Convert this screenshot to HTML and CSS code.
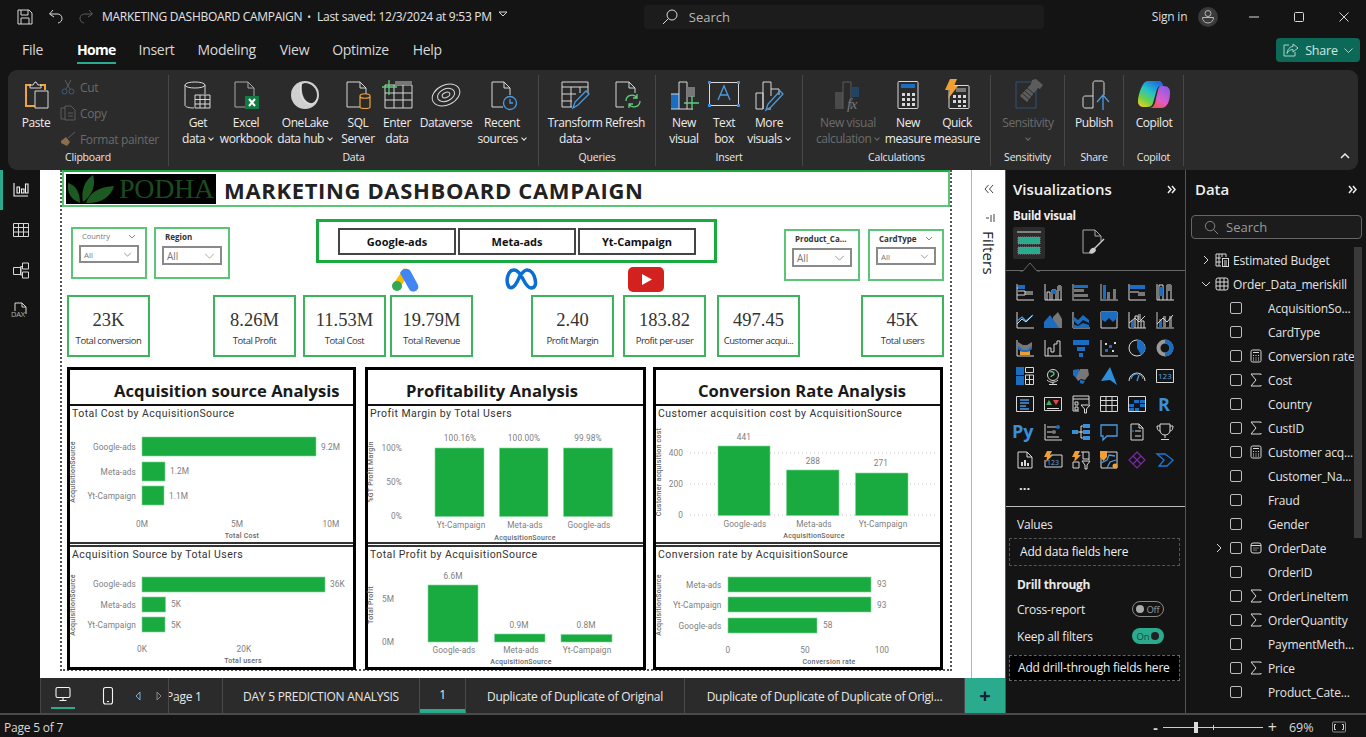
FILE: index.html
```html
<!DOCTYPE html>
<html lang="en">
<head>
<meta charset="utf-8">
<title>MARKETING DASHBOARD CAMPAIGN</title>
<link rel="stylesheet" href="styles.css">
</head>
<body>
<div class="app">
  <header class="titlebar">
    <svg class="tb-ic" viewBox="0 0 16 16"><path class="s" d="M1 1h11l3 3v11H1zM4 1v5h7V1M4 15V9h8v6"/></svg>
    <svg class="tb-ic undo" viewBox="0 0 16 16"><path class="s" d="M5 1 1.500 5 6 8M2 5h7a4.500 4.500 0 0 1 1 9"/></svg>
    <svg class="tb-ic redo" viewBox="0 0 16 16"><path class="dim" d="M11 1l3.500 4L10 8M14 5H7a4.500 4.500 0 0 0-1 9"/></svg>
    <span class="doc">MARKETING DASHBOARD CAMPAIGN</span><span class="doc-dot">•</span><span class="doc-saved">Last saved: 12/3/2024 at 9:53 PM</span>
    <svg class="doc-caret" viewBox="0 0 10 6"><path class="s" d="M1 1h8L5 5z"/></svg>
    <div class="search-top">
      <svg viewBox="0 0 16 16"><circle class="s" cx="10" cy="6" r="5"/><path class="s" d="M6.500 9.500 1 15"/></svg>
      <span>Search</span>
    </div>
    <span class="signin">Sign in</span>
    <svg class="avatar" viewBox="0 0 20 20"><circle class="av" cx="10" cy="10" r="10"/><circle class="sa" cx="10" cy="6.500" r="3"/><path class="sa" d="M4.500 10.500h11c0 3-2 5.500-5.500 5.500s-5.500-2.500-5.500-5.500z"/></svg>
    <svg class="win first" viewBox="0 0 12 12"><path class="s" d="M1 6h10"/></svg>
    <svg class="win" viewBox="0 0 12 12"><rect class="s" x="1.500" y="1.500" width="9" height="9" rx="1"/></svg>
    <svg class="win" viewBox="0 0 12 12"><path class="s" d="M1.500 1.500l9 9M10.500 1.500l-9 9"/></svg>
  </header>

  <nav class="menubar">
    <span class="menu m-file">File</span>
    <span class="menu m-home">Home</span>
    <span class="menu m-ins">Insert</span>
    <span class="menu m-mod">Modeling</span>
    <span class="menu m-view">View</span>
    <span class="menu m-opt">Optimize</span>
    <span class="menu m-help">Help</span>
    <button class="share"><svg viewBox="0 0 16 14"><path class="sh" d="M6 2H1v11h11V9M10 1l5 4-5 4V6.500C7 6.500 5 8 4 10.500 4.500 6 7 3.500 10 3.500z"/></svg>Share<svg class="share-caret" viewBox="0 0 9 5"><path class="sh" d="M.5.5l4 4 4-4"/></svg></button>
  </nav>

  <section class="ribbon">
    <div class="grp g-clip">
      <div class="grp-body">
        <div class="btn w40 paste">
          <svg viewBox="0 0 32 32"><path class="o" d="M15 27H6V6h5M20 6h5v5"/><path class="s" d="M10 6h3l2-3h1l2 3h3v3H10zM15 12h13v17H15z"/></svg>
          <span>Paste</span>
        </div>
        <div class="small">
          <div class="sm-row"><svg viewBox="0 0 16 16"><path class="dim" d="M5 1l5 9M11 1 6 10"/><circle class="dimb" cx="4.500" cy="12.500" r="2.500"/><circle class="dimb" cx="11.500" cy="12.500" r="2.500"/></svg><span>Cut</span></div>
          <div class="sm-row"><svg viewBox="0 0 16 16"><path class="dim" d="M5 3H1v11h4M5 1h6l4 4v10H5zM8 8h5M8 11h5"/></svg><span>Copy</span></div>
          <div class="sm-row"><svg viewBox="0 0 16 16"><path class="dim" d="M15 1 8 7"/><path class="dimf" d="M1 10l5-4 4 5-3 4-6-3z"/></svg><span>Format painter</span></div>
        </div>
      </div>
      <div class="grp-label">Clipboard</div>
    </div>

    <div class="grp g-data">
      <div class="grp-body">
        <div class="btn w44">
          <svg viewBox="0 0 32 32"><path class="s" d="M3 6v20c0 2 4 3 9 3M23 6v9M3 6c0-4 20-4 20 0s-20 4-20 0z"/><path class="s" d="M13 16h15v13H13zM13 20.500h15M13 25h15M18 16v13M23 16v13"/></svg>
          <span>Get<br>data <i class="cv"></i></span>
        </div>
        <div class="btn w52">
          <svg viewBox="0 0 32 32"><path class="sd" d="M16 28H5V3h13l6 6v9M18 3v6h6"/><rect class="xl" x="15" y="17" width="14" height="13"/><path class="w" d="M19 20l6 7M25 20l-6 7"/></svg>
          <span>Excel<br>workbook</span>
        </div>
        <div class="btn w66">
          <svg viewBox="0 0 32 32"><circle class="fl" cx="16" cy="16" r="14"/><path class="dk" d="M13 5c-1 8 1 17 8 19 4 1 7-3 7-8 0-7-6-12-12-12z"/><path class="skl" d="M12 4c-2 9 0 18 8 21 3 1 6-1 8-5"/></svg>
          <span>OneLake<br>data hub <i class="cv"></i></span>
        </div>
        <div class="btn w40">
          <svg viewBox="0 0 32 32"><path class="s" d="M18 28H5V3h13l6 6v6M18 3v6h6"/><path class="o1" d="M18 17c0-3 10-3 10 0v11c0 2-10 2-10 0zM18 17c0 3 10 3 10 0"/></svg>
          <span>SQL<br>Server</span>
        </div>
        <div class="btn w38">
          <svg viewBox="0 0 32 32"><path class="s" d="M4 6h27v23H4zM4 14h27M4 21h27M13 6v23M22 6v23"/><rect class="fg" x="14" y="2" width="17" height="4"/><path class="gr" d="M8 1v15M1 8h15"/></svg>
          <span>Enter<br>data</span>
        </div>
        <div class="btn w60">
          <svg viewBox="0 0 32 32"><g transform="rotate(-25 16 16)"><ellipse class="s" cx="16" cy="16" rx="14.500" ry="10"/><ellipse class="s" cx="16" cy="16" rx="9" ry="6"/><ellipse class="s" cx="16" cy="16" rx="4" ry="2.500"/></g></svg>
          <span>Dataverse</span>
        </div>
        <div class="btn w52">
          <svg viewBox="0 0 32 32"><path class="s" d="M17 28H6V3h12l6 6v7M18 3v6h6"/><circle class="bl" cx="24" cy="24" r="6.500"/><path class="bl" d="M24 20v4h3"/></svg>
          <span>Recent<br>sources <i class="cv"></i></span>
        </div>
      </div>
      <div class="grp-label">Data</div>
    </div>

    <div class="grp g-query">
      <div class="grp-body">
        <div class="btn w54">
          <svg viewBox="0 0 32 32"><path class="s" d="M3 3h26v11M3 3v25h10M3 8h26M3 15h14M3 22h10M12 8v20M21 8v6"/><path class="bl" d="M14 29l2-6L27 12l3 3-11 11z"/></svg>
          <span>Transform<br>data <i class="cv"></i></span>
        </div>
        <div class="btn w46">
          <svg viewBox="0 0 32 32"><path class="s" d="M15 28H7V3h13l6 6v5M20 3v6h6"/><path class="gn" d="M17 22c0-6 8-8 11-3M31 22c0 6-8 8-11 3M28 15v4h-4M20 29v-4h4"/></svg>
          <span>Refresh</span>
        </div>
      </div>
      <div class="grp-label">Queries</div>
    </div>

    <div class="grp g-insert">
      <div class="grp-body">
        <div class="btn w44">
          <svg viewBox="0 0 32 32"><rect class="fb" x="3" y="15" width="8" height="15"/><path class="s" d="M3 15h8M11 30V3h8v27M3 30h22"/><rect class="fg" x="19" y="8" width="8" height="10"/><path class="gr" d="M24 17v14M16 24h15"/></svg>
          <span>New<br>visual</span>
        </div>
        <div class="btn w36">
          <svg viewBox="0 0 32 32"><rect class="s" x="1.500" y="3.500" width="29" height="23"/><path class="bl" d="M10 21l6-14 6 14M12 16h8"/><path class="fb2" d="M0 2h3v3H0zM29 2h3v3h-3zM0 25h3v3H0zM29 25h3v3h-3z"/></svg>
          <span>Text<br>box</span>
        </div>
        <div class="btn w54">
          <svg viewBox="0 0 32 32"><path class="s" d="M3 14h7v16H3zM10 30V3h8v14M18 10h8v6M18 30h-3"/><path class="bl" d="M13 31l2-6L27 12l3 3-12 13z"/></svg>
          <span>More<br>visuals <i class="cv"></i></span>
        </div>
      </div>
      <div class="grp-label">Insert</div>
    </div>

    <div class="grp g-calc">
      <div class="grp-body">
        <div class="btn w76 off">
          <svg viewBox="0 0 32 32"><rect class="fd" x="3" y="13" width="8" height="17"/><path class="dim" d="M11 30V3h8v27"/><rect class="fdb" x="19" y="8" width="8" height="10"/><text class="fx" x="15" y="30">fx</text></svg>
          <span>New visual<br>calculation <i class="cv"></i></span>
        </div>
        <div class="btn w44">
          <svg viewBox="0 0 32 32"><rect class="s" x="6" y="2.500" width="20" height="27" rx="1"/><rect class="fb" x="9" y="5" width="14" height="4"/><path class="dots" d="M10 14h3v3h-3zM15 14h3v3h-3zM20 14h3v3h-3zM10 19h3v3h-3zM15 19h3v3h-3zM20 19h3v3h-3zM10 24h3v3h-3zM15 24h3v3h-3zM20 24h3v3h-3z"/></svg>
          <span>New<br>measure</span>
        </div>
        <div class="btn w54">
          <svg viewBox="0 0 32 32"><rect class="s" x="8" y="6.500" width="20" height="23" rx="1"/><rect class="fg" x="15" y="9" width="10" height="4"/><path class="dots" d="M12 16h3v3h-3zM17 16h3v3h-3zM22 16h3v3h-3zM12 21h3v3h-3zM17 21h3v3h-3zM22 21h3v3h-3zM17 26h3v2h-3zM22 26h3v2h-3z"/><path class="fo" d="M9 0h7l-3 7h4L7 20l2-9H4z"/></svg>
          <span>Quick<br>measure</span>
        </div>
      </div>
      <div class="grp-label">Calculations</div>
    </div>

    <div class="grp g-sens">
      <div class="grp-body">
        <div class="btn w64 off">
          <svg viewBox="0 0 32 32"><path class="sbl" d="M4 3h20v26H4z"/><path class="fd2" d="M20 1l4-1 7 6-3 4-2-1-11 14-7-6L19 5z"/><path class="stk" d="M11 15l7 6M13 12l7 6M15 9l7 6"/></svg>
          <span>Sensitivity<br><i class="cv"></i></span>
        </div>
      </div>
      <div class="grp-label">Sensitivity</div>
    </div>

    <div class="grp g-share">
      <div class="grp-body">
        <div class="btn w48">
          <svg viewBox="0 0 32 32"><path class="s" d="M15 29H7c-1 0-2-1-2-2v-8c0-1 1-2 2-2h8zM15 17V4c0-1 1-2 2-2h7c1 0 2 1 2 2v12"/><path class="bl" d="M25 31V16M19 23l6-7 6 7"/></svg>
          <span>Publish</span>
        </div>
      </div>
      <div class="grp-label">Share</div>
    </div>

    <div class="grp g-copilot">
      <div class="grp-body">
        <div class="btn w52">
          <svg viewBox="0 0 32 32">
            <defs>
              <linearGradient id="cpa" x1="0.700" y1="0" x2="0.100" y2="1"><stop offset="0" stop-color="#1f6fe0"/><stop offset=".4" stop-color="#25c2c8"/><stop offset=".7" stop-color="#6bd04a"/><stop offset="1" stop-color="#f5d020"/></linearGradient>
              <linearGradient id="cpb" x1="0.800" y1="0" x2="0.200" y2="1"><stop offset="0" stop-color="#8a5ce6"/><stop offset=".6" stop-color="#e05cc8"/><stop offset="1" stop-color="#f0553a"/></linearGradient>
            </defs>
            <path fill="url(#cpb)" d="M23 7h3c4 0 6 3 6 6 0 6-1 11-4 14-1 1-3 2-5 2H11c3 0 5-2 6-5l3-13c.5-2 1.500-4 3-4z"/>
            <path fill="url(#cpa)" d="M10 2h11c2 0 4 2 4 5h-2c-2 0-3 1-4 3l-4 14c-1 3-3 4-6 4H5c-3 0-5-3-5-5 0-7 3-15 6-19 1-1 2-2 4-2z"/>
          </svg>
          <span>Copilot</span>
        </div>
      </div>
      <div class="grp-label">Copilot</div>
    </div>
    <svg class="rib-caret" viewBox="0 0 10 6"><path class="wh2" d="M1 5l4-4 4 4"/></svg>
  </section>

  <main class="work">
    <aside class="rail">
      <div class="rail-it active"><svg viewBox="0 0 16 16"><path class="wh1" d="M1 1v13h14M4 11V5h2.500v6zM8.500 11V7h2.500v4zM12.500 11V2H15v9z"/></svg></div>
      <div class="rail-it"><svg viewBox="0 0 16 16"><path class="s" d="M.5 1.500h15v13H.5zM.5 5.500h15M.5 10h15M5.500 1.500v13M10.500 1.500v13"/></svg></div>
      <div class="rail-it"><svg viewBox="0 0 16 16"><path class="s" d="M.5 5.500h7v7h-7zM9.500 1h6v6h-6zM9.500 10h6v6h-6zM7.500 4.500h2M7.500 13h2M8 4.500V13"/></svg></div>
      <div class="rail-it"><svg viewBox="0 0 16 16"><path class="s" d="M2 9V1h7l4 4v7M9 1v4h4"/><text class="dax" x="-2" y="15">DAX</text></svg></div>
    </aside>

    <div class="center">
      <div class="canvas-row">
        <div class="canvas">
          <div class="page">
            <div class="report-title">
              <div class="logo">
                <svg viewBox="0 0 50 30"><path class="lf" d="M14 29C4 25 1 18 2 9c7 2 12 8 12 20zM17 28C15 17 18 7 27 1c3 9 0 20-10 27zM20 29C23 20 31 13 48 12c-3 11-14 18-28 17z"/></svg>
                <span>PODHA</span>
              </div>
              <h1>MARKETING DASHBOARD CAMPAIGN</h1>
            </div>

            <div class="filters-row">
              <div class="slicer sl-a">
                <div class="sl-head light">Country<svg viewBox="0 0 8 5"><path class="chev" d="M1 1l3 3 3-3"/></svg></div>
                <div class="sl-drop small-all"><span>All</span><svg viewBox="0 0 10 6"><path class="chev" d="M1 1l4 4 4-4"/></svg></div>
              </div>
              <div class="slicer sl-b">
                <div class="sl-head">Region</div>
                <div class="sl-drop"><span>All</span><svg viewBox="0 0 12 7"><path class="chevo" d="M1 1l5 5 5-5"/></svg></div>
              </div>
              <div class="campaign">
                <div class="campaign-box">
                  <div class="cbtn">Google-ads</div>
                  <div class="cbtn">Meta-ads</div>
                  <div class="cbtn">Yt-Campaign</div>
                </div>
                <div class="brand-row">
                  <svg class="brand b-g" viewBox="0 0 28 26"><path class="yg" d="M13 2 1 20h9L18 8z"/><path class="bg" d="M9 7c2-5 9-6 11-1l7 13c2 6-6 9-9 4z"/><circle class="gg" cx="6" cy="20" r="5"/></svg>
                  <svg class="brand b-m" viewBox="0 0 32 24"><path class="meta" d="M4 20C0 14 3 3 9 3c4 0 7 5 9 9s5 9 8 9c5 0 5-5 4-9-1-5-4-9-8-9-3 0-5 3-7 6l-3 6c-2 4-5 7-8 5z"/></svg>
                  <svg class="brand b-y" viewBox="0 0 36 25"><rect class="yt" width="36" height="25" rx="5"/><path class="wf" d="M14 7l10 5.500L14 18z"/></svg>
                </div>
              </div>
              <div class="slicer sl-c">
                <div class="sl-head">Product_Ca...</div>
                <div class="sl-drop"><span>All</span><svg viewBox="0 0 12 7"><path class="chev" d="M1 1l5 5 5-5"/></svg></div>
              </div>
              <div class="slicer sl-d">
                <div class="sl-head">CardType<svg viewBox="0 0 8 5"><path class="chev" d="M1 1l3 3 3-3"/></svg></div>
                <div class="sl-drop small-all"><span>All</span><svg viewBox="0 0 10 6"><path class="chev" d="M1 1l4 4 4-4"/></svg></div>
              </div>
            </div>

            <div class="cards">
              <div class="card c1"><b>23K</b><span>Total conversion</span></div>
              <div class="card c2"><b>8.26M</b><span>Total Profit</span></div>
              <div class="card c3"><b>11.53M</b><span>Total Cost</span></div>
              <div class="card c4"><b>19.79M</b><span>Total Revenue</span></div>
              <div class="card c5"><b>2.40</b><span>Profit Margin</span></div>
              <div class="card c6"><b>183.82</b><span>Profit per-user</span></div>
              <div class="card c7"><b>497.45</b><span>Customer acqui...</span></div>
              <div class="card c8"><b>45K</b><span>Total users</span></div>
            </div>

            <div class="analysis">
              <section class="col col-a">
                <h2>Acquisition source Analysis</h2>
                <div class="chart top">
                  <h3>Total Cost by AcquisitionSource</h3>
                  <svg viewBox="70 420 283 122">
                    <text class="at" transform="rotate(-90 75 472)" x="75" y="472">AcquisitionSource</text>
                    <text class="tk e" x="136" y="450">Google-ads</text><text class="tk e" x="136" y="475">Meta-ads</text><text class="tk e" x="136" y="499">Yt-Campaign</text>
                    <rect class="bar" x="142" y="437" width="174" height="19"/><rect class="bar" x="142" y="462" width="23" height="19"/><rect class="bar" x="142" y="486" width="22" height="19"/>
                    <text class="tk" x="321" y="450">9.2M</text><text class="tk" x="170" y="474">1.2M</text><text class="tk" x="169" y="499">1.1M</text>
                    <text class="tk m" x="142" y="527">0M</text><text class="tk m" x="237" y="527">5M</text><text class="tk m" x="331" y="527">10M</text>
                    <text class="at m2" x="242" y="538">Total Cost</text>
                  </svg>
                </div>
                <div class="chart bottom">
                  <h3>Acquisition Source by Total Users</h3>
                  <svg viewBox="70 561 283 106">
                    <text class="at" transform="rotate(-90 75 605)" x="75" y="605">AcquisitionSource</text>
                    <text class="tk e" x="136" y="587">Google-ads</text><text class="tk e" x="136" y="608">Meta-ads</text><text class="tk e" x="136" y="628">Yt-Campaign</text>
                    <rect class="bar" x="142" y="577" width="183" height="15"/><rect class="bar" x="142" y="597" width="23.500" height="15"/><rect class="bar" x="142" y="617" width="23" height="15"/>
                    <text class="tk" x="330" y="587">36K</text><text class="tk" x="171" y="607">5K</text><text class="tk" x="171" y="628">5K</text>
                    <text class="tk m" x="142" y="652">0K</text><text class="tk m" x="244" y="652">20K</text>
                    <text class="at m2" x="243" y="663">Total users</text>
                  </svg>
                </div>
              </section>

              <section class="col col-b">
                <h2>Profitability Analysis</h2>
                <div class="chart top">
                  <h3>Profit Margin by Total Users</h3>
                  <svg viewBox="368 420 275 122">
                    <text class="at" transform="rotate(-90 373 472)" x="373" y="472">%GT Profit Margin</text>
                    <text class="tk e" x="402" y="451">100%</text><text class="tk e" x="402" y="485">50%</text><text class="tk e" x="402" y="519">0%</text>
                    <rect class="bar" x="435" y="448" width="49" height="68.500"/><rect class="bar" x="499.500" y="448" width="48.500" height="68.500"/><rect class="bar" x="563.500" y="448" width="49" height="68.500"/>
                    <text class="tk m" x="460" y="441">100.16%</text><text class="tk m" x="524" y="441">100.00%</text><text class="tk m" x="588" y="441">99.98%</text>
                    <text class="tk m" x="461" y="528">Yt-Campaign</text><text class="tk m" x="525" y="528">Meta-ads</text><text class="tk m" x="589" y="528">Google-ads</text>
                    <text class="at m2" x="525" y="540">AcquisitionSource</text>
                  </svg>
                </div>
                <div class="chart bottom">
                  <h3>Total Profit by AcquisitionSource</h3>
                  <svg viewBox="368 561 275 106">
                    <text class="at" transform="rotate(-90 373 605)" x="373" y="605">Total Profit</text>
                    <text class="tk e" x="394" y="602">5M</text><text class="tk e" x="394" y="645">0M</text>
                    <rect class="bar" x="428" y="585" width="50" height="57"/><rect class="bar" x="494.500" y="634" width="50.500" height="8"/><rect class="bar" x="561" y="634.500" width="51" height="7.500"/>
                    <text class="tk m" x="453" y="579">6.6M</text><text class="tk m" x="519" y="628">0.9M</text><text class="tk m" x="586" y="628">0.8M</text>
                    <text class="tk m" x="454" y="653">Google-ads</text><text class="tk m" x="521" y="653">Meta-ads</text><text class="tk m" x="587" y="653">Yt-Campaign</text>
                    <text class="at m2" x="521" y="664">AcquisitionSource</text>
                  </svg>
                </div>
              </section>

              <section class="col col-c">
                <h2>Conversion Rate Analysis</h2>
                <div class="chart top">
                  <h3>Customer acquisition cost by AcquisitionSource</h3>
                  <svg viewBox="656 420 284 122">
                    <path class="grid" d="M690 453h248M690 484h248M690 515h248"/>
                    <text class="at" transform="rotate(-90 661 472)" x="661" y="472">Customer acquisition cost</text>
                    <text class="tk e" x="683" y="456">400</text><text class="tk e" x="683" y="487">200</text><text class="tk e" x="683" y="518">0</text>
                    <rect class="bar" x="718" y="446" width="52" height="69.500"/><rect class="bar" x="786.500" y="470" width="52.500" height="45.500"/><rect class="bar" x="855.500" y="473" width="52.500" height="42.500"/>
                    <text class="tk m" x="744" y="440">441</text><text class="tk m" x="813" y="464">288</text><text class="tk m" x="881" y="466">271</text>
                    <text class="tk m" x="745" y="527">Google-ads</text><text class="tk m" x="814" y="527">Meta-ads</text><text class="tk m" x="883" y="527">Yt-Campaign</text>
                    <text class="at m2" x="814" y="538">AcquisitionSource</text>
                  </svg>
                </div>
                <div class="chart bottom">
                  <h3>Conversion rate by AcquisitionSource</h3>
                  <svg viewBox="656 561 284 106">
                    <text class="at" transform="rotate(-90 661 605)" x="661" y="605">AcquisitionSource</text>
                    <text class="tk e" x="721.500" y="588">Meta-ads</text><text class="tk e" x="721.500" y="608">Yt-Campaign</text><text class="tk e" x="721.500" y="629">Google-ads</text>
                    <rect class="bar" x="728" y="577" width="143" height="15"/><rect class="bar" x="728" y="597" width="143" height="15"/><rect class="bar" x="728" y="618" width="89" height="15"/>
                    <text class="tk" x="877" y="587">93</text><text class="tk" x="877" y="608">93</text><text class="tk" x="823" y="628">58</text>
                    <text class="tk m" x="728" y="653">0</text><text class="tk m" x="805" y="653">50</text><text class="tk m" x="882" y="653">100</text>
                    <text class="at m2" x="829" y="664">Conversion rate</text>
                  </svg>
                </div>
              </section>
            </div>
          </div>
        </div>
        <aside class="filters-pane">
          <svg class="fp-col" viewBox="0 0 10 10"><path class="dk2" d="M4.500 1 1 5l3.500 4M9 1 5.500 5 9 9"/></svg>
          <svg class="fp-ic" viewBox="0 0 10 10"><path class="dk2" d="M1 5h3M6 2v7M9 1v8"/></svg>
          <span class="fp-text">Filters</span>
        </aside>
      </div>
      <div class="pagebar">
        <div class="view-sw">
          <span class="vs-desk"><svg viewBox="0 0 16 16"><rect class="wh1" x="1" y="1.500" width="14" height="10" rx="1.500"/><path class="wh1" d="M8 12v2M4.500 14.500h7"/></svg></span>
          <svg class="vs-phone" viewBox="0 0 12 18"><rect class="wh1" x="1.500" y=".5" width="9" height="16.500" rx="2"/><path class="wh1" d="M5 14.500h2"/></svg>
          <svg class="vs-arr a1" viewBox="0 0 6 10"><path class="bl2" d="M5 1 1 5l4 4z"/></svg>
          <svg class="vs-arr a2" viewBox="0 0 6 10"><path class="sg" d="M1 1l4 4-4 4z"/></svg>
        </div>
        <div class="ptab t-p1"><span>Page 1</span></div>
        <div class="ptab t-d5">DAY 5 PREDICTION ANALYSIS</div>
        <div class="ptab t-1 on">1</div>
        <div class="ptab t-dd">Duplicate of Duplicate of Original</div>
        <div class="ptab t-ddd">Duplicate of Duplicate of Duplicate of Origi...</div>
        <div class="ptab-add">+</div>
      </div>
    </div>

    <aside class="viz">
      <div class="pane-head"><span>Visualizations</span><svg viewBox="0 0 9 9"><path class="wh2" d="M1 1l3 3.500L1 8M5 1l3 3.500L5 8"/></svg></div>
      <div class="build">Build visual</div>
      <div class="build-tabs">
        <span class="bt-on"><svg viewBox="0 0 24 24"><path class="s" d="M0 1h24"/><rect class="teal-d" x="1" y="6" width="22" height="7"/><rect class="teal-d" x="1" y="16" width="22" height="7"/></svg></span>
        <svg class="bt-fmt" viewBox="0 0 24 26"><path class="sd" d="M11 24H1V1h12l6 6v5M13 1v6h6"/><path class="w2" d="M22 10 12 20"/><path class="wf2" d="M7 24c1-4 3-6 6-5l1 2c-1 3-3 4-7 3z"/></svg>
      </div>
      <div class="notch-line"><svg viewBox="0 0 20 10"><path class="notch" d="M0 10h3l7-8 7 8h3"/></svg></div>
      <div class="viz-grid">
        <svg viewBox="0 0 18 18"><path class="s" d="M1 1v16h17M1 5h6M1 12h8"/><rect class="fb" x="2" y="2" width="7" height="4"/><rect class="fg" x="9" y="8" width="8" height="4"/><path class="s" d="M2 8h7v4"/></svg>
        <svg viewBox="0 0 18 18"><path class="s" d="M1 1v16h17M3 17V9h3v8M8 17V7h4v10M14 17V3h3v14"/><rect class="fb" x="8" y="7" width="4" height="4"/><rect class="fg" x="13" y="3" width="4" height="5"/></svg>
        <svg viewBox="0 0 18 18"><path class="sg2" d="M1 1v16h17"/><rect class="fb" x="2" y="2" width="14" height="3"/><rect class="fg" x="2" y="6" width="10" height="3"/><rect class="fg" x="2" y="11" width="14" height="3"/></svg>
        <svg viewBox="0 0 18 18"><path class="sg2" d="M1 1v16h17"/><rect class="fb" x="3" y="2" width="3" height="15"/><rect class="fg" x="7" y="9" width="3" height="8"/><rect class="fg" x="13" y="6" width="3" height="11"/></svg>
        <svg viewBox="0 0 18 18"><path class="s" d="M1 1v16h17M2 9h9"/><rect class="fb" x="2" y="2" width="15" height="4"/><rect class="fg" x="10" y="9" width="7" height="4"/></svg>
        <svg viewBox="0 0 18 18"><path class="s" d="M1 1v16h17M3 17V2h4v15M11 17V2h4v15"/><rect class="fb" x="3" y="4" width="4" height="9"/><rect class="fg" x="11" y="2" width="4" height="6"/></svg>
        <svg viewBox="0 0 18 18"><path class="s" d="M1 1v16h17"/><path class="bl" d="M1 10l5-4 4 4 7-6"/><path class="s" d="M1 13l5-5 4 3 6-6"/></svg>
        <svg viewBox="0 0 18 18"><path class="fg" d="M9 6l5-5 4 7v9H9z"/><path class="fb" d="M0 17V11l6-7 5 7 4 6z"/></svg>
        <svg viewBox="0 0 18 18"><path class="s" d="M1 17h17M1 1v16"/><path class="fb" d="M1 5l5 4 5-5 6 5v3l-6-3-5 5-5-5z"/><path class="fb" d="M1 13l5 2 5-3 6 2v3H1z"/></svg>
        <svg viewBox="0 0 18 18"><path class="s" d="M1 1h16v16H1z"/><path class="fb" d="M1 1h16v6l-4 4-4-4-4 4-4-3z"/></svg>
        <svg viewBox="0 0 18 18"><path class="s" d="M1 1v16h17"/><rect class="fb" x="3" y="9" width="3" height="8"/><rect class="fg" x="10" y="3" width="3" height="6"/><path class="s" d="M7 17V5h3v12M13 17V10h3v7M1 12l6-5 4 4 6-6"/></svg>
        <svg viewBox="0 0 18 18"><path class="sg2" d="M1 1v16h17"/><rect class="fb" x="3" y="8" width="3" height="9"/><rect class="fg" x="7" y="5" width="3" height="12"/><rect class="fg" x="13" y="5" width="3" height="12"/><path class="s" d="M1 13l6-6 4 4 6-7"/></svg>
        <svg viewBox="0 0 18 18"><path class="s" d="M1 1v16h17"/><path class="fg" d="M2 3l5 3h4l5-3v6l-5 3H7L2 9z"/><path class="fb" d="M2 7l5 4h4l5-4v3l-5 4H7l-5-4z"/><path class="fo" d="M4 12l3 1h4l3-1v4H4z"/></svg>
        <svg viewBox="0 0 18 18"><path class="s" d="M1 1v16h17M4 17V9h3v4h3V5h3V2h3v15"/></svg>
        <svg viewBox="0 0 18 18"><path class="fb" d="M1 1h16v5H1zM5 8h8v4H5z"/><path class="fb" d="M7 14h4v4H7z"/></svg>
        <svg viewBox="0 0 18 18"><path class="s" d="M1 1v16h17"/><path class="fb" d="M5 10h3v3H5zM9 6h3v3H9z"/><path class="w3" d="M5 4h2v2H5zM14 3h2v2h-2zM12 11h2v2h-2z"/></svg>
        <svg viewBox="0 0 18 18"><circle class="s" cx="9" cy="9" r="8"/><path class="fb" d="M9 1a8 8 0 0 1 4 15L9 9z"/></svg>
        <svg viewBox="0 0 18 18"><circle class="ring" cx="9" cy="9" r="6.500"/><path class="ring2" d="M9 2.500a6.500 6.500 0 0 1 0 13"/></svg>
        <svg viewBox="0 0 18 18"><path class="fb" d="M0 0h8v8H0zM0 9h8v9H0z"/><path class="s" d="M9.500.5h8v5h-8zM9.500 8h8v9.500h-8zM13.500 8v9.500M9.500 12.500h8"/></svg>
        <svg viewBox="0 0 18 18"><circle class="s" cx="9" cy="8" r="5.500"/><path class="gn" d="M6 5c2-1 4 0 4 2s-3 1-3 3"/><path class="s" d="M3 13c3 3 8 3 11 0M9 15v2M5 17.500h8"/></svg>
        <svg viewBox="0 0 18 18"><path class="fb" d="M1 3l6-1 1 5-4 4-3-3z"/><path class="fg" d="M8 2h8l1 6-4 5-4-1-3 2-2-3z"/><path class="fb" d="M8 13l5 1-2 3-3-1z"/></svg>
        <svg viewBox="0 0 18 18"><path class="az" d="M10 0l7 18-7-5-9 1z"/></svg>
        <svg viewBox="0 0 18 18"><path class="s" d="M1 14a8 8 0 0 1 16 0"/><path class="bl" d="M3 12a6 6 0 0 1 7-5M11 8l-2 6"/><path class="sg" d="M11 7a6 6 0 0 1 4 5"/></svg>
        <svg viewBox="0 0 18 18"><path class="s" d="M.5 2.500h17v13H.5z"/><text class="n123" x="2" y="12">123</text></svg>
        <svg viewBox="0 0 18 18"><path class="s" d="M.5 1.500h17v15H.5z"/><path class="bl" d="M4 5h9M4 8h9M4 11h6M4 14h9"/></svg>
        <svg viewBox="0 0 18 18"><path class="s" d="M.5 2.500h17v13H.5zM3 13.500h12"/><path class="gn2" d="M5 5l3 5H2z"/><path class="rd" d="M9 5h6l-3 5z"/></svg>
        <svg viewBox="0 0 18 18"><path class="s" d="M7 16H1V1h16v8M1 4h16M3 7h3v3H3zM3 12h3v3H3z"/><path class="s" d="M9 10h9l-3.500 4v4h-2v-4z"/></svg>
        <svg viewBox="0 0 18 18"><path class="s" d="M.5 1.500h17v15H.5zM.5 5.500h17M.5 10.500h17M6 1.500v15M12 1.500v15"/></svg>
        <svg viewBox="0 0 18 18"><path class="s" d="M.5 1.500h17v15H.5z"/><path class="fb" d="M6 5h5v3H6zM12 5h5v3h-5zM1 9h5v3H1zM1 13h5v3H1zM7 13h4v3H7zM12 9h5v3h-5z"/></svg>
        <svg viewBox="0 0 18 18"><text class="lr" x="2" y="16">R</text></svg>
        <svg viewBox="0 0 18 18" class="py"><text class="lr" x="-4" y="15">Py</text></svg>
        <svg viewBox="0 0 18 18"><path class="s" d="M1 1v16h17M3 4h10M3 9h6M3 14h12"/><circle class="fb" cx="14" cy="4" r="2"/><circle class="fg" cx="10" cy="9" r="2"/></svg>
        <svg viewBox="0 0 18 18"><path class="s" d="M6 9h3M9 3v12M9 3h2M9 9h2M9 15h2"/><path class="fb2" d="M0 7h6v4H0zM11 1h7v4h-7zM11 7h7v4h-7zM11 13h7v4h-7z"/></svg>
        <svg viewBox="0 0 18 18"><path class="bl" d="M1 2h16v11H7l-4 4v-4H1z"/></svg>
        <svg viewBox="0 0 18 18"><path class="s" d="M3 17V1h8l4 4v12zM11 1v4h4M7 8h6M7 13h6"/><circle class="fb" cx="5" cy="8" r="1"/></svg>
        <svg viewBox="0 0 18 18"><path class="s" d="M4 1h10v6c0 3-2 5-5 5s-5-2-5-5zM4 3H1c0 3 1 5 3 5M14 3h3c0 3-1 5-3 5M9 12v3M5 16.500h8"/></svg>
        <svg viewBox="0 0 18 18"><path class="s" d="M2 17V1h9l5 5v11zM11 1v5h5"/><path class="w3" d="M5 11h2v4H5zM8 9h2v6H8zM11 12h2v3h-2z"/></svg>
        <svg viewBox="0 0 18 18"><path class="s" d="M7 4h11v12H1V9"/><text class="n123s" x="3" y="14">123</text><path class="fo" d="M3 0h5L6 4h3L2 11l1-5H0z"/></svg>
        <svg viewBox="0 0 18 18"><path class="s" d="M9 1h8v8M1 11h6v6H1zM10 10h8l-3 4v4h-2v-4z"/><path class="s" d="M11 1v7h6"/><path class="fo" d="M3 0h5L6 4h3L2 11l1-5H0z"/></svg>
        <svg viewBox="0 0 18 18"><path class="s" d="M1 1h16v16H1z"/><path class="bl" d="M1 12l6-3 2-5 6 1M7 17l3-6 6-2"/><path class="fo" d="M0 0h7v6l-3.500 4L0 6z"/><circle class="fo" cx="15" cy="15" r="2.500"/></svg>
        <svg viewBox="0 0 18 18"><path class="pu" d="M9 1l4 4-4 4-4-4zM5 5l4 4-4 4-4-4zM13 5l4 4-4 4-4-4zM9 9l4 4-4 4-4-4z"/></svg>
        <svg viewBox="0 0 18 18"><path class="bl3" d="M1 3h8l8 6-6 6H3l5-6zM1 3l7 6"/></svg>
      </div>
      <div class="more">...</div>
      <div class="values">
        <div class="v-label">Values</div>
        <div class="drop">Add data fields here</div>
        <div class="v-bold">Drill through</div>
        <div class="v-row"><span>Cross-report</span><span class="tog off"><i></i>Off</span></div>
        <div class="v-row k"><span>Keep all filters</span><span class="tog on">On<i></i></span></div>
        <div class="drop drop2">Add drill-through fields here</div>
      </div>
    </aside>

    <aside class="data">
      <div class="pane-head"><span>Data</span><svg viewBox="0 0 9 9"><path class="wh2" d="M1 1l3 3.500L1 8M5 1l3 3.500L5 8"/></svg></div>
      <div class="d-search"><svg viewBox="0 0 16 16"><circle class="sg" cx="6.500" cy="6.500" r="5"/><path class="sg" d="M10 10l5 5"/></svg><span>Search</span></div>
      <div class="scroll-thumb"></div>
      <ul class="tree">
        <li class="tbl"><svg class="chv" viewBox="0 0 8 10"><path class="s" d="M2 1l4 4-4 4"/></svg><svg class="tic" viewBox="0 0 14 14"><path class="s" d="M1 1h10v3M1 1v12h5M1 5h5M1 9h5M4 1v12M7 1v3"/><rect class="s" x="7.500" y="5.500" width="6" height="8"/><path class="s" d="M9 8h3M9 10h3M9 12h3"/></svg><span>Estimated Budget</span></li>
        <li class="tbl"><svg class="chv" viewBox="0 0 10 8"><path class="s" d="M1 2l4 4 4-4"/></svg><svg class="tic" viewBox="0 0 14 14"><rect class="s" x="1" y="1" width="12" height="12" rx="2"/><path class="s" d="M1 5h12M1 9h12M5 1v12M9 1v12"/></svg><span>Order_Data_meriskill</span></li>
        <li><i class="cb"></i><i class="fi"></i><span>AcquisitionSo...</span></li>
        <li><i class="cb"></i><i class="fi"></i><span>CardType</span></li>
        <li><i class="cb"></i><svg class="fi" viewBox="0 0 12 14"><rect class="s" x="1" y="1" width="10" height="12" rx="1.500"/><path class="s" d="M3 3.500h6M3 6.500h1M5.500 6.500h1M8 6.500h1M3 9h1M5.500 9h1M8 9h1M3 11h1M5.500 11h1M8 11h1"/></svg><span>Conversion rate</span></li>
        <li><i class="cb"></i><svg class="fi" viewBox="0 0 12 14"><path class="s" d="M11 2V1H1l5 6-5 6h10v-1"/></svg><span>Cost</span></li>
        <li><i class="cb"></i><i class="fi"></i><span>Country</span></li>
        <li><i class="cb"></i><svg class="fi" viewBox="0 0 12 14"><path class="s" d="M11 2V1H1l5 6-5 6h10v-1"/></svg><span>CustID</span></li>
        <li><i class="cb"></i><svg class="fi" viewBox="0 0 12 14"><rect class="s" x="1" y="1" width="10" height="12" rx="1.500"/><path class="s" d="M3 3.500h6M3 6.500h1M5.500 6.500h1M8 6.500h1M3 9h1M5.500 9h1M8 9h1M3 11h1M5.500 11h1M8 11h1"/></svg><span>Customer acq...</span></li>
        <li><i class="cb"></i><i class="fi"></i><span>Customer_Na...</span></li>
        <li><i class="cb"></i><i class="fi"></i><span>Fraud</span></li>
        <li><i class="cb"></i><i class="fi"></i><span>Gender</span></li>
        <li class="exp"><svg class="chv2" viewBox="0 0 8 10"><path class="s" d="M2 1l4 4-4 4"/></svg><i class="cb"></i><svg class="fi" viewBox="0 0 12 12"><rect class="s" x="1" y="1" width="10" height="10" rx="2"/><path class="s" d="M1 3.500h10M3.500 6h1M5.500 6h1M7.500 6h1M3.500 8h1M5.500 8h1"/></svg><span>OrderDate</span></li>
        <li><i class="cb"></i><i class="fi"></i><span>OrderID</span></li>
        <li><i class="cb"></i><svg class="fi" viewBox="0 0 12 14"><path class="s" d="M11 2V1H1l5 6-5 6h10v-1"/></svg><span>OrderLineItem</span></li>
        <li><i class="cb"></i><svg class="fi" viewBox="0 0 12 14"><path class="s" d="M11 2V1H1l5 6-5 6h10v-1"/></svg><span>OrderQuantity</span></li>
        <li><i class="cb"></i><i class="fi"></i><span>PaymentMeth...</span></li>
        <li><i class="cb"></i><svg class="fi" viewBox="0 0 12 14"><path class="s" d="M11 2V1H1l5 6-5 6h10v-1"/></svg><span>Price</span></li>
        <li><i class="cb"></i><i class="fi"></i><span>Product_Cate...</span></li>
      </ul>
    </aside>
  </main>

  <footer class="status">
    <span class="pg">Page 5 of 7</span>
    <span class="z-minus">-</span>
    <span class="slider"><i class="tick"></i><i class="thumb"></i></span>
    <span class="z-plus">+</span>
    <span class="z-val">69%</span>
    <svg class="z-fit" viewBox="0 0 14 12"><rect class="sg" x=".5" y="1" width="13" height="10" rx="1"/><path class="s" d="M4 3.500H2.500v5H4M10 3.500h1.500v5H10"/></svg>
  </footer>
</div>
</body>
</html>
```

FILE: styles.css
```css
* { box-sizing: border-box; }
html, body { margin: 0; height: 100%; overflow: hidden; background: #141414; }
body { font-family: "Open Sans", "Noto Sans", sans-serif; color: #e8e8e8; font-size: 12px; }
.app { width: 1366px; height: 737px; display: flex; flex-direction: column; background: #141414; }
svg { display: block; overflow: visible; }
h1, h2, h3, ul { margin: 0; padding: 0; }

/* svg paint classes */
.s { fill: none; stroke: #d8d8d8; stroke-width: 1; }
.sd { fill: none; stroke: #a8a8a8; stroke-width: 1; }
.sg { fill: none; stroke: #8a8a8a; stroke-width: 1; }
.sg2 { fill: none; stroke: #888; stroke-width: 1.500; }
.sa { fill: none; stroke: #b8b8b8; stroke-width: 1; }
.sh { fill: none; stroke: #a9d3c8; stroke-width: 1; }
.av { fill: #3a3a3a; }
.wh1 { fill: none; stroke: #f4f4f4; stroke-width: 1.100; }
.dim { fill: none; stroke: #5c5c5c; stroke-width: 1; }
.dimb { fill: none; stroke: #3d5f85; stroke-width: 1; }
.dimf { fill: #8a6f4d; }
.sbl { fill: none; stroke: #2f5478; stroke-width: 1; }
.fd2 { fill: #5c5c5c; }
.stk { fill: none; stroke: #2b2b2b; stroke-width: 1; }
.o { fill: none; stroke: #f0a33a; stroke-width: 2; }
.o1 { fill: none; stroke: #f0a33a; stroke-width: 1.200; }
.bl { fill: none; stroke: #4a9be0; stroke-width: 1.300; }
.bl2 { fill: none; stroke: #7aaede; stroke-width: 1; }
.bl3 { fill: none; stroke: #1a78d6; stroke-width: 1.300; }
.gn { fill: none; stroke: #5fd07c; stroke-width: 1.300; }
.gr { fill: none; stroke: #5fd07c; stroke-width: 1.300; }
.gn2 { fill: #3fae5a; }
.rd { fill: #e0484a; }
.fb { fill: #1a6dc0; }
.fb2 { fill: #3a8fdc; }
.fg { fill: #777; }
.fd { fill: #4a4a4a; }
.fdb { fill: #1f4465; }
.fo { fill: #f0a030; }
.xl { fill: #107c41; }
.w { fill: none; stroke: #fff; stroke-width: 2; }
.w2 { fill: none; stroke: #ccc; stroke-width: 1.500; }
.wf2 { fill: #ccc; }
.w3 { fill: #d8d8d8; }
.fl { fill: #cfcfcf; }
.dk { fill: #2b2b2b; }
.skl { fill: none; stroke: #e4e4e4; stroke-width: 1; }
.dots { fill: #d8d8d8; }
.fx { font: italic 15px "Liberation Serif", serif; fill: #777; }
.az { fill: #2d8fdc; }
.ring { fill: none; stroke: #999; stroke-width: 4; }
.ring2 { fill: none; stroke: #1a6dc0; stroke-width: 4; }
.pu { fill: none; stroke: #7a2aa8; stroke-width: 1.200; }
.n123 { font: 8px "Open Sans", sans-serif; fill: #5ba5e6; }
.n123s { font: 7px "Open Sans", sans-serif; fill: #5ba5e6; }
.lr { font: bold 18px "Open Sans", sans-serif; fill: #3a8fdc; }
.py { overflow: visible; }
.dax { font: 7.500px "Open Sans", sans-serif; fill: #b0b0b0; letter-spacing: -.2px; }

/* title bar */
.titlebar { height: 33px; flex: none; display: flex; align-items: center; padding-left: 17px; }
.tb-ic { width: 16px; height: 16px; flex: none; margin-right: 14px; }
.undo { margin-left: 1px; }
.doc, .doc-saved { font-size: 12px; letter-spacing: -.28px; color: #e4e4e4; white-space: nowrap; }
.doc { margin-left: -6px; }
.doc-dot { margin: 0 6px 0 5px; font-size: 10px; }
.doc-caret { width: 10px; height: 6px; margin: -5px 0 0 6px; flex: none; }
.search-top { width: 400px; height: 24px; margin-left: 136px; flex: none; background: #1c1c1c; border-radius: 3px; display: flex; align-items: center; padding-left: 18px; font-size: 13px; color: #b8b8b8; }
.search-top svg { width: 16px; height: 16px; margin-right: 11px; }
.signin { margin-left: 108px; font-size: 12px; letter-spacing: -.2px; color: #ddd; }
.avatar { width: 20px; height: 20px; margin-left: 11px; flex: none; }
.win { width: 12px; height: 12px; margin-left: 33px; flex: none; }
.win.first { margin-left: 30px; }

/* menu */
.menubar { height: 37px; flex: none; display: flex; align-items: flex-start; position: relative; padding-top: 7px; font-size: 14px; color: #d8d8d8; letter-spacing: -.3px; }
.menu { line-height: 19px; }
.m-file { margin-left: 22px; }
.m-home { margin-left: 34px; color: #fff; font-weight: 700; border-bottom: 2px solid #2bab8e; height: 24px; letter-spacing: -.7px; }
.m-ins { margin-left: 23px; }
.m-mod { margin-left: 23px; }
.m-view { margin-left: 24px; }
.m-opt { margin-left: 23px; }
.m-help { margin-left: 24px; }
.share { position: absolute; left: 1276px; top: 5px; width: 84px; height: 24px; border: 0; border-radius: 4px; background: #0d6957; color: #cfe6e0; font: 12.500px "Open Sans", sans-serif; letter-spacing: -.2px; display: flex; align-items: center; justify-content: center; gap: 6px; padding: 0; }
.share svg { width: 16px; height: 14px; }
.share .share-caret { width: 9px; height: 5px; }

/* ribbon */
.ribbon { height: 100px; flex: none; margin: 0 8px; width: 1350px; background: #2b2b2b; border-radius: 9px; display: flex; position: relative; z-index: 3; padding-top: 5px; }
.grp { display: flex; flex-direction: column; height: 91px; border-right: 1px solid #474747; flex: none; }
.grp-body { height: 75px; flex: none; display: flex; }
.grp-label { text-align: center; font-size: 10.500px; letter-spacing: -.2px; color: #e8e8e8; height: 16px; line-height: 14px; }
.g-clip { width: 161px; }
.g-clip .grp-body { padding-left: 8px; }
.g-data { width: 370px; }
.g-data .grp-body { padding-left: 7px; }
.g-query { width: 117px; }
.g-query .grp-body { padding-left: 9px; }
.g-insert { width: 147px; }
.g-insert .grp-body { padding-left: 6px; }
.g-calc { width: 188px; }
.g-calc .grp-body { padding-left: 7px; }
.g-sens { width: 74px; }
.g-sens .grp-body { padding-left: 5px; }
.g-share { width: 59px; }
.g-share .grp-body { padding-left: 5px; }
.g-copilot { width: 60px; }
.g-copilot .grp-body { padding-left: 4px; }
.btn { flex: none; display: flex; flex-direction: column; align-items: center; text-align: center; font-size: 12px; letter-spacing: -.42px; line-height: 16px; color: #ececec; white-space: nowrap; padding-top: 4px; }
.btn svg { width: 32px; height: 32px; margin-bottom: 4px; flex: none; }
.btn.off { color: #6b6b6b; }
.w36 { width: 36px; } .w38 { width: 38px; } .w40 { width: 40px; } .w44 { width: 44px; } .w46 { width: 46px; } .w48 { width: 48px; }
.w50 { width: 50px; } .w52 { width: 52px; } .w54 { width: 54px; } .w60 { width: 60px; } .w64 { width: 64px; } .w66 { width: 66px; } .w76 { width: 76px; }
.cv { display: inline-block; width: 4px; height: 4px; border-right: 1px solid currentColor; border-bottom: 1px solid currentColor; transform: rotate(45deg); margin: 0 1px 3px 1px; }
.small { margin: -1px 0 0 4px; font-size: 12px; letter-spacing: -.35px; color: #6a6a6a; }
.sm-row { display: flex; align-items: center; height: 26px; gap: 4px; white-space: nowrap; }
.sm-row svg { width: 16px; height: 16px; flex: none; }
.rib-caret { position: absolute; left: 1332px; top: 83px; width: 10px; height: 6px; }

/* workspace */
.work { flex: 1; display: flex; min-height: 0; height: 543px; }
.rail { width: 40px; flex: none; display: flex; flex-direction: column; }
.rail-it { height: 40px; display: flex; align-items: center; justify-content: center; border-left: 3px solid transparent; }
.rail-it svg { width: 16px; height: 16px; margin-left: -1px; }
.rail-it.active { border-left-color: #2bab8e; }
.center { width: 965px; flex: none; display: flex; flex-direction: column; }
.canvas-row { height: 508px; display: flex; flex: none; }
.canvas { width: 931px; background: #fff; flex: none; padding-left: 20px; }
.page { width: 892px; height: 501px; border-left: 2px dotted #555; border-right: 2px dotted #555; border-bottom: 2px dotted #555; color: #222; }
.filters-pane { width: 34px; flex: none; background: #fff; border-left: 1px solid #b5b5b5; display: flex; flex-direction: column; align-items: center; color: #222; padding-top: 14px; }
.fp-col { width: 10px; height: 10px; }
.fp-ic { width: 10px; height: 10px; margin-top: 19px; margin-left: 3px; }
.dk2 { fill: none; stroke: #444; stroke-width: 1; }
.fp-text { writing-mode: vertical-rl; font-size: 15px; margin-top: 8px; letter-spacing: .2px; line-height: 20px; }

/* report header */
.report-title { height: 37px; border: 2px solid #5cc476; border-top-color: #1aab40; display: flex; align-items: center; padding-left: 2px; }
.logo { width: 150px; height: 30px; background: #000; display: flex; align-items: center; flex: none; font-family: "Liberation Serif", serif; font-size: 28px; color: #1b4a1e; line-height: 30px; letter-spacing: -.3px; }
.logo svg { width: 50px; height: 30px; flex: none; margin-right: 3px; }
.lf { fill: #1c5a22; }
.report-title h1 { margin-left: 8px; padding-top: 2px; font-size: 22px; font-weight: 700; color: #222; letter-spacing: .65px; white-space: nowrap; }
.filters-row { display: flex; align-items: flex-start; height: 88px; }
.slicer { width: 76px; height: 52px; border: 2px solid #5cc476; padding: 0 6px; flex: none; }
.sl-a { margin: 20px 0 0 9px; }
.sl-b { margin: 20px 0 0 7px; }
.sl-c { margin: 22px 0 0 67px; }
.sl-d { margin: 22px 0 0 8px; }
.sl-head { font-size: 8px; font-weight: 700; color: #333; height: 15px; line-height: 15px; display: flex; justify-content: space-between; align-items: center; padding-left: 3px; white-space: nowrap; }
.sl-head svg { width: 8px; height: 5px; margin-right: 3px; }
.sl-head.light { font-weight: 400; color: #777; font-size: 7.500px; }
.sl-drop { margin-top: 2px; height: 19px; border: 2px solid #8a8a8a; display: flex; align-items: center; justify-content: space-between; padding: 0 5px 0 3px; font-size: 10px; color: #777; }
.sl-drop svg { width: 11px; height: 6px; }
.small-all { font-size: 8px; height: 18px; margin-top: 1px; }
.small-all svg { width: 9px; height: 5px; }
.chev { fill: none; stroke: #888; stroke-width: 1; }
.chevo { fill: none; stroke: #c49a6c; stroke-width: 1; }
.campaign { width: 401px; margin: 12px 0 0 86px; flex: none; }
.campaign-box { height: 44px; border: 3px solid #1aab40; display: flex; gap: 2px; padding: 6px 0 0 19px; }
.cbtn { width: 118px; height: 27px; border: 2px solid #444; font-size: 11px; font-weight: 700; color: #111; display: flex; align-items: center; justify-content: center; }
.brand-row { display: flex; padding-left: 75px; margin-top: 3px; align-items: center; height: 26px; }
.brand { flex: none; }
.b-g { width: 28px; height: 26px; }
.b-m { width: 32px; height: 24px; margin-left: 86px; }
.b-y { width: 36px; height: 25px; margin-left: 91px; }
.yg { fill: #fbbc04; } .bg { fill: #4285f4; } .gg { fill: #34a853; }
.meta { fill: none; stroke: #0a6fd0; stroke-width: 3.500; }
.yt { fill: #d3211f; } .wf { fill: #fff; }

/* cards */
.cards { display: flex; padding-left: 5px; height: 62px; }
.card { width: 83px; height: 62px; border: 2px solid #3cb45c; display: flex; flex-direction: column; align-items: center; flex: none; padding-top: 12px; }
.card b { font: 400 18.500px/22px "Liberation Serif", serif; color: #333; }
.card span { font-size: 9.500px; letter-spacing: -.45px; line-height: 14px; margin-top: 3px; color: #333; white-space: nowrap; }
.c2 { margin-left: 63px; } .c3 { margin-left: 7px; } .c4 { margin-left: 4px; }
.c5 { margin-left: 58px; } .c6 { margin-left: 9px; } .c7 { margin-left: 11px; } .c8 { margin-left: 61px; }

/* charts */
.analysis { display: flex; padding: 10px 0 0 5px; }
.col { height: 303px; border: 3px solid #000; flex: none; display: flex; flex-direction: column; background: #fff; }
.col-a { width: 289px; }
.col-b { width: 281px; margin-left: 9px; }
.col-c { width: 290px; margin-left: 7px; }
.col h2 { height: 36px; border-bottom: 2px solid #111; font-size: 16.600px; font-weight: 700; color: #1a1a1a; line-height: 42px; white-space: nowrap; flex: none; }
.col-a h2 { padding-left: 44px; }
.col-b h2 { padding-left: 38px; }
.col-c h2 { padding-left: 42px; }
.chart { flex: none; }
.chart.top { height: 138px; border-bottom: 2px solid #333; }
.chart.bottom { height: 122px; border-top: 2px solid #333; margin-top: 1px; }
.chart h3 { font: 400 10.500px/16px Roboto, sans-serif; height: 14px; letter-spacing: .45px; color: #333; padding-left: 2px; white-space: nowrap; }
.chart svg { width: 100%; }
.chart.top svg { height: 122px; }
.chart.bottom svg { height: 106px; }
.bar { fill: #1aab40; stroke: #7fd69a; stroke-width: .6; }
.tk { font: 8.300px Roboto, sans-serif; fill: #808080; letter-spacing: .1px; }
.tk.e { text-anchor: end; }
.tk.m { text-anchor: middle; }
.at { font: 500 7px Roboto, sans-serif; fill: #666; text-anchor: middle; letter-spacing: .25px; }
.grid { fill: none; stroke: #c8c8c8; stroke-width: 1; stroke-dasharray: 1 3; }

/* page tabs */
.pagebar { height: 35px; flex: none; background: #2b2b2b; display: flex; border-left: 1px solid #444; color: #e8e8e8; font-size: 12px; }
.view-sw { width: 128px; flex: none; display: flex; align-items: center; border-right: 1px solid #4a4a4a; }
.vs-desk { margin-left: 10px; width: 24px; height: 28px; padding: 5px 4px 0; border-bottom: 2px solid #2bab8e; display: block; align-self: flex-start; margin-top: 3px; flex: none; }
.vs-desk svg { width: 16px; height: 16px; }
.vs-phone { width: 12px; height: 18px; margin-left: 27px; flex: none; }
.vs-arr { width: 6px; height: 10px; flex: none; }
.a1 { margin-left: 21px; }
.a2 { margin-left: 15px; }
.ptab { flex: none; display: flex; align-items: center; justify-content: center; border-right: 1px solid #4a4a4a; white-space: nowrap; letter-spacing: -.25px; overflow: hidden; padding-top: 1px; }
.t-p1 { width: 54px; justify-content: flex-start; }
.t-p1 span { margin-left: -3px; }
.t-d5 { width: 197px; }
.t-1 { width: 46px; }
.t-1.on { border-bottom: 4px solid #2bab8e; }
.t-dd { width: 219px; }
.t-ddd { width: 280px; }
.ptab-add { width: 40px; flex: none; background: #2bab8e; color: #123; display: flex; align-items: center; justify-content: center; font-size: 20px; font-weight: 700; }

/* viz pane */
.viz { width: 181px; flex: none; border-left: 1px solid #555; border-right: 1px solid #555; height: 543px; display: flex; flex-direction: column; }
.pane-head { height: 38px; flex: none; display: flex; align-items: center; justify-content: space-between; font-size: 15px; font-weight: 600; color: #f0f0f0; padding: 0 9px 0 7px; letter-spacing: -.05px; }
.pane-head svg { width: 9px; height: 9px; }
.wh2 { fill: none; stroke: #eee; stroke-width: 1.500; }
.build { font-size: 11.500px; font-weight: 700; color: #f0f0f0; padding-left: 7px; letter-spacing: -.3px; line-height: 16px; }
.build-tabs { display: flex; padding: 3px 0 0 7px; height: 35px; flex: none; }
.bt-on { width: 32px; height: 32px; background: #2b2b2b; padding: 4px; border-radius: 2px; display: block; flex: none; }
.bt-on svg { width: 24px; height: 24px; }
.teal-d { fill: #2bab8e; stroke: #888; stroke-dasharray: 1 1; }
.bt-fmt { width: 24px; height: 26px; margin: 2px 0 0 37px; }
.notch-line { height: 11px; border-bottom: 1px solid #666; position: relative; flex: none; margin-top: 1px; }
.notch-line svg { position: absolute; left: 14px; top: 1px; width: 20px; height: 10px; }
.notch { fill: #141414; stroke: #666; stroke-width: 1; }
.viz-grid { display: grid; grid-template-columns: repeat(6, 18px); grid-auto-rows: 18px; column-gap: 10px; row-gap: 10px; padding: 12px 0 0 10px; flex: none; }
.viz-grid svg { width: 18px; height: 18px; }
.more { padding-left: 13px; font-size: 13px; font-weight: 700; line-height: 14px; margin-top: 9px; flex: none; }
.values { border-top: 1px solid #bbb; margin-top: 14px; padding-top: 9px; flex: none; }
.v-label { padding-left: 11px; font-size: 12px; line-height: 18px; letter-spacing: -.2px; }
.drop { margin: 4px 5px 0 3px; height: 28px; border: 1px dashed #555; padding-left: 10px; font-size: 12px; line-height: 26px; letter-spacing: -.2px; color: #f0f0f0; white-space: nowrap; }
.v-bold { padding-left: 11px; font-weight: 700; font-size: 12px; margin-top: 10px; line-height: 18px; letter-spacing: -.3px; }
.v-row { display: flex; justify-content: space-between; align-items: center; padding: 0 21px 0 11px; height: 18px; margin-top: 6px; font-size: 12px; letter-spacing: -.2px; }
.v-row.k { margin-top: 9px; }
.tog { width: 32px; height: 16px; border-radius: 8px; display: flex; align-items: center; justify-content: center; gap: 2px; font-size: 9.500px; letter-spacing: -.2px; }
.tog i { width: 8px; height: 8px; border-radius: 50%; display: block; flex: none; }
.tog.off { border: 1px solid #888; color: #999; }
.tog.off i { background: #aaa; }
.tog.on { background: #2bab8e; color: #104a3e; }
.tog.on i { background: #222; }
.drop2 { background: #000; height: 26px; margin-top: 10px; line-height: 24px; padding-left: 8px; border-color: #666; }

/* data pane */
.data { width: 180px; flex: none; position: relative; height: 543px; }
.data .pane-head { padding: 0 9px 0 9px; }
.d-search { margin: 7px 4px 0 5px; height: 24px; border: 1px solid #666; border-radius: 4px; background: #1c1c1c; display: flex; align-items: center; padding-left: 12px; color: #9a9a9a; font-size: 13px; }
.d-search svg { width: 15px; height: 15px; margin-right: 7px; flex: none; }
.scroll-thumb { position: absolute; left: 168px; top: 77px; width: 8px; height: 291px; background: #3a3a3a; }
.tree { list-style: none; margin-top: 9px; font-size: 12px; letter-spacing: -.15px; color: #e4e4e4; }
.tree li { height: 24px; display: flex; align-items: center; padding-left: 44px; white-space: nowrap; }
.tree li.tbl { padding-left: 15px; }
.tree li.exp { padding-left: 29px; }
.chv { width: 10px; height: 10px; flex: none; margin-right: 4px; }
.chv2 { width: 8px; height: 10px; margin-right: 7px; flex: none; }
.tic { width: 14px; height: 14px; flex: none; margin-right: 4px; }
.cb { width: 12px; height: 12px; border: 1px solid #bbb; border-radius: 2px; flex: none; display: block; }
.fi { width: 12px; height: 14px; margin: 0 6px 0 8px; flex: none; display: block; }
.tree li span { overflow: hidden; }

/* status */
.status { height: 24px; flex: none; border-top: 2px solid #4a4a4a; display: flex; align-items: center; font-size: 12px; color: #d8d8d8; padding-top: 2px; }
.pg { margin-left: 4px; letter-spacing: -.2px; }
.z-minus { margin-left: 1090px; font-size: 14px; font-weight: 700; }
.slider { width: 100px; height: 1px; background: #ccc; position: relative; margin-left: 5px; }
.tick { position: absolute; left: 50px; top: -2px; width: 1px; height: 5px; background: #ccc; }
.thumb { position: absolute; left: 31px; top: -5px; width: 4px; height: 11px; background: #ddd; }
.z-plus { margin-left: 5px; font-size: 16px; }
.z-val { margin-left: 12px; font-size: 12.500px; }
.z-fit { width: 14px; height: 12px; margin-left: 18px; }
```
